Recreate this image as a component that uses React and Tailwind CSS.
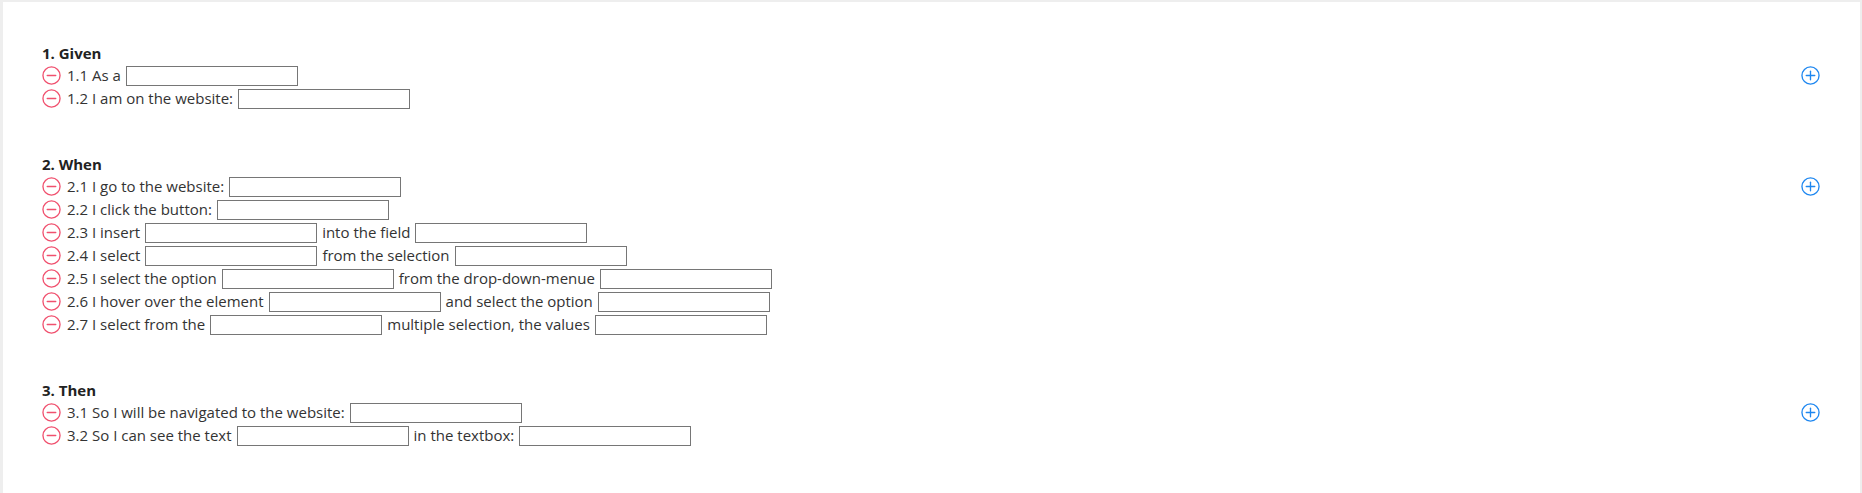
const sections = [
  {
    title: "1. Given",
    rows: [
      ["1.1 As a", null],
      ["1.2 I am on the website:", null],
    ],
  },
  {
    title: "2. When",
    rows: [
      ["2.1 I go to the website:", null],
      ["2.2 I click the button:", null],
      ["2.3 I insert", null, "into the field", null],
      ["2.4 I select", null, "from the selection", null],
      ["2.5 I select the option", null, "from the drop-down-menue", null],
      ["2.6 I hover over the element", null, "and select the option", null],
      ["2.7 I select from the", null, "multiple selection, the values", null],
    ],
  },
  {
    title: "3. Then",
    rows: [
      ["3.1 So I will be navigated to the website:", null],
      ["3.2 So I can see the text", null, "in the textbox:", null],
    ],
  },
];

function MinusIcon() {
  return (
    <svg width="19" height="19" viewBox="0 0 20 20" fill="none" stroke="#f0506e" strokeWidth="1.4">
      <circle cx="10" cy="10" r="9" />
      <line x1="5.5" y1="10" x2="14.5" y2="10" strokeLinecap="round" />
    </svg>
  );
}

function PlusIcon() {
  return (
    <svg width="19" height="19" viewBox="0 0 20 20" fill="none" stroke="#1e87f0" strokeWidth="1.4">
      <circle cx="10" cy="10" r="9" />
      <line x1="5.5" y1="10" x2="14.5" y2="10" strokeLinecap="round" />
      <line x1="10" y1="5.5" x2="10" y2="14.5" strokeLinecap="round" />
    </svg>
  );
}

function Row({ parts }) {
  return (
    <div className="flex items-center h-[23px] gap-[5px]">
      <button type="button" className="flex items-center justify-center mr-[1px]">
        <MinusIcon />
      </button>
      {parts.map((p, i) =>
        p === null ? (
          <input key={i} type="text" className="w-[172px] h-[20px] border border-[#767676] bg-white outline-none" />
        ) : (
          <span key={i} className="whitespace-nowrap">{p}</span>
        )
      )}
    </div>
  );
}

export default function App() {
  return (
    <div
      className="min-h-[493px] w-full bg-white border-l-[3px] border-t-[2px] border-r-[2px] border-[#eeeeee] text-[15px] text-[#333333]"
      style={{ fontFamily: '"Open Sans", "Noto Sans", sans-serif' }}
    >
      <div className="pt-[40px] pl-[39px] pr-[40px] flex flex-col gap-[43px]">
        {sections.map((s) => (
          <div key={s.title} className="flex flex-col">
            <div className="h-[22px] leading-[22px] font-bold text-[#222222]">{s.title}</div>
            <div className="flex items-start justify-between">
              <div className="flex flex-col">
                {s.rows.map((r, i) => (
                  <Row key={i} parts={r} />
                ))}
              </div>
              <button type="button" className="h-[23px] flex items-center">
                <PlusIcon />
              </button>
            </div>
          </div>
        ))}
      </div>
    </div>
  );
}
